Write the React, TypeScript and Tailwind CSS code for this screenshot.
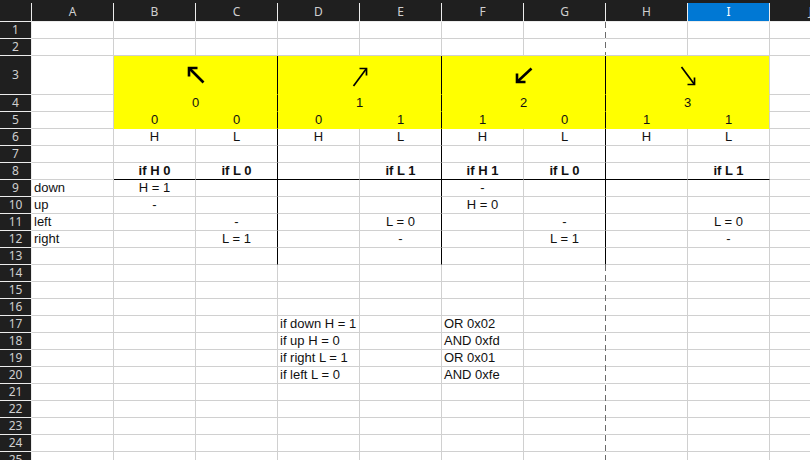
import React from 'react'

const COLS = ['A', 'B', 'C', 'D', 'E', 'F', 'G', 'H', 'I', 'J']
const ROW_COUNT = 25

const DATA: Record<number, string[]> = {
    5: ['', '0', '0', '0', '1', '1', '0', '1', '1'],
    6: ['', 'H', 'L', 'H', 'L', 'H', 'L', 'H', 'L'],
    8: ['', 'if H 0', 'if L 0', '', 'if L 1', 'if H 1', 'if L 0', '', 'if L 1'],
    9: ['down', 'H = 1', '', '', '', '-'],
    10: ['up', '-', '', '', '', 'H = 0'],
    11: ['left', '', '-', '', 'L = 0', '', '-', '', 'L = 0'],
    12: ['right', '', 'L = 1', '', '-', '', 'L = 1', '', '-'],
    17: ['', '', '', 'if down H = 1', '', 'OR 0x02'],
    18: ['', '', '', 'if up H = 0', '', 'AND 0xfd'],
    19: ['', '', '', 'if right L = 1', '', 'OR 0x01'],
    20: ['', '', '', 'if left L = 0', '', 'AND 0xfe'],
}

// arrows drawn the way the sheet shows them (thick / thin strokes differ)
const ArrowUpLeft = () => (
    <svg width="18" height="18" viewBox="0 0 18 18" fill="none" stroke="#000" strokeWidth="2.6" strokeLinejoin="miter">
        <path d="M2 2 L16.5 16.5" />
        <path d="M2 10.5 V2 H10.5" />
    </svg>
)

const ArrowUpRight = () => (
    <svg width="16" height="20" viewBox="0 0 16 20" fill="none" stroke="#000" strokeWidth="1.7" strokeLinejoin="miter" className="mt-[3px]">
        <path d="M14.5 1.5 L1.5 19" />
        <path d="M7.5 1.5 H14.5 V8.5" />
    </svg>
)

const ArrowDownLeft = () => (
    <svg width="18" height="17" viewBox="0 0 18 17" fill="none" stroke="#000" strokeWidth="2.6" strokeLinejoin="miter">
        <path d="M2 15 L16.5 1.5" />
        <path d="M2 6.5 V15 H10.5" />
    </svg>
)

const ArrowDownRight = () => (
    <svg width="16" height="20" viewBox="0 0 16 20" fill="none" stroke="#000" strokeWidth="1.7" strokeLinejoin="miter" className="mt-[2px]">
        <path d="M1.5 1 L14.5 18.5" />
        <path d="M7.5 18.5 H14.5 V11.5" />
    </svg>
)

const RowHeader = ({ n, tall }: { n: number; tall?: boolean }) => (
    <div
        className={`w-[32px] shrink-0 ${tall ? 'h-[39px]' : 'h-[17px]'} flex items-center justify-center bg-[#1f1f1f] border-r border-b border-[#ececec] text-[12px] text-[#cfcfcf] font-['Noto_Sans',sans-serif]`}
    >
        {n}
    </div>
)

const cellBorder = (r: number, c: number) => {
    const yellow = r >= 3 && r <= 5 && c >= 1 && c <= 8
    const classes = ['border-r border-b border-[#d0d0d0]']
    if (yellow) {
        classes.push('bg-[#ffff00] border-b-[#ffff00]')
        if (c !== 8) classes.push('border-r-[#ffff00]')
    }
    if (r >= 3 && r <= 13 && (c === 2 || c === 4 || c === 6)) classes.push('border-r-black')
    if (r === 8 && c >= 1 && c <= 8) classes.push('border-b-black')
    if ((r <= 2 || r >= 14) && c === 6) classes.push('border-r-transparent')
    return classes.join(' ')
}

const NormalRow = ({ r }: { r: number }) => {
    const values = DATA[r] ?? []
    return (
        <div className="flex h-[17px]">
            <RowHeader n={r} />
            {COLS.map((col, c) => {
                const value = values[c] ?? ''
                const left = c === 0 || r >= 17
                return (
                    <div
                        key={col}
                        className={`w-[82px] shrink-0 h-full flex items-center whitespace-nowrap leading-[16px] ${
                            left ? 'justify-start pl-[2px]' : 'justify-center'
                        } ${r === 8 ? 'font-bold' : ''} ${cellBorder(r, c)}`}
                    >
                        {value}
                    </div>
                )
            })}
        </div>
    )
}

// rows 3 and 4 have B:C, D:E, F:G, H:I merged
const MergedRow = ({ r, items }: { r: number; items: React.ReactNode[] }) => (
    <div className={`flex ${r === 3 ? 'h-[39px]' : 'h-[17px]'}`}>
        <RowHeader n={r} tall={r === 3} />
        <div className="w-[82px] shrink-0 h-full border-r border-b border-[#d0d0d0]" />
        {items.map((item, i) => (
            <div
                key={i}
                className={`w-[164px] shrink-0 h-full flex items-center justify-center leading-[16px] bg-[#ffff00] border-r border-b border-b-[#ffff00] ${
                    i === 3 ? 'border-r-[#d0d0d0]' : 'border-r-black'
                }`}
            >
                {item}
            </div>
        ))}
        <div className="w-[82px] shrink-0 h-full border-r border-b border-[#d0d0d0]" />
    </div>
)

export default function App() {
    const rows: React.ReactNode[] = []
    for (let r = 1; r <= ROW_COUNT; r++) {
        if (r === 3) {
            rows.push(
                <MergedRow key={r} r={r} items={[<ArrowUpLeft />, <ArrowUpRight />, <ArrowDownLeft />, <ArrowDownRight />]} />
            )
        } else if (r === 4) {
            rows.push(<MergedRow key={r} r={r} items={['0', '1', '2', '3']} />)
        } else {
            rows.push(<NormalRow key={r} r={r} />)
        }
    }

    return (
        <div className="relative w-[810px] h-[460px] overflow-hidden bg-white text-[13px] text-[#111] font-['Liberation_Sans',Arial,sans-serif]">
            {/* Column headers */}
            <div className="flex h-[22px] bg-[#1f1f1f] pt-[3px] border-b border-[#ececec]">
                <div className="w-[32px] shrink-0 h-full border-r border-[#ececec]" />
                {COLS.map((col) => (
                    <div
                        key={col}
                        className={`w-[82px] shrink-0 h-full flex items-center justify-center border-r border-[#ececec] text-[12px] font-['Noto_Sans',sans-serif] ${
                            col === 'I' ? 'bg-[#0078d4] text-white' : 'text-[#cfcfcf]'
                        }`}
                    >
                        {col}
                    </div>
                ))}
            </div>

            {rows}

            {/* Page break markers */}
            <div className="absolute left-[605px] top-[22px] w-px h-[33px] bg-[repeating-linear-gradient(to_bottom,#6b6b6b_0_6px,transparent_6px_10px)]" />
            <div className="absolute left-[605px] top-[265px] bottom-0 w-px bg-[repeating-linear-gradient(to_bottom,#6b6b6b_0_6px,transparent_6px_10px)]" />
        </div>
    )
}
